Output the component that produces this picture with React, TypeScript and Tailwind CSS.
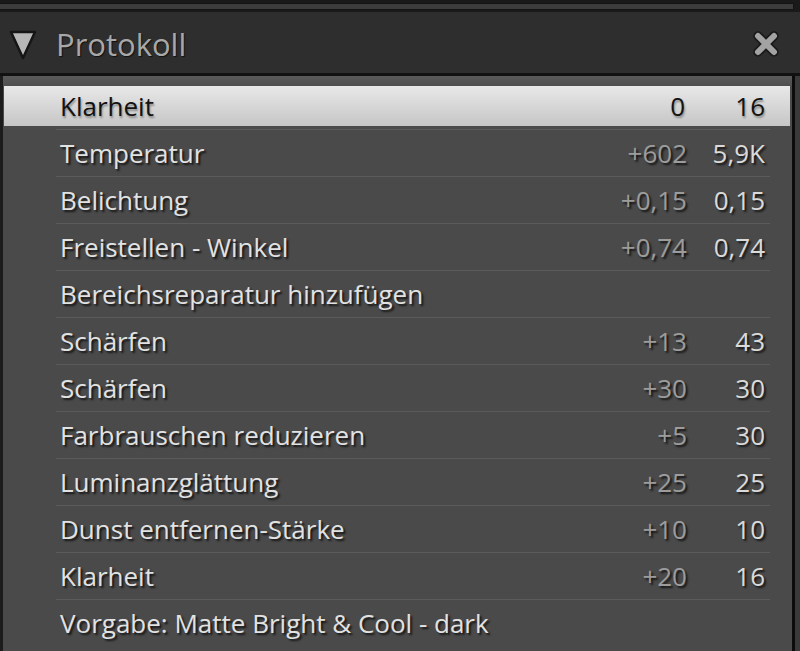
import React from 'react';

type Step = {
  name: string;
  delta?: string;
  value?: string;
};

const steps: Step[] = [
  { name: 'Temperatur', delta: '+602', value: '5,9K' },
  { name: 'Belichtung', delta: '+0,15', value: '0,15' },
  { name: 'Freistellen - Winkel', delta: '+0,74', value: '0,74' },
  { name: 'Bereichsreparatur hinzufügen' },
  { name: 'Schärfen', delta: '+13', value: '43' },
  { name: 'Schärfen', delta: '+30', value: '30' },
  { name: 'Farbrauschen reduzieren', delta: '+5', value: '30' },
  { name: 'Luminanzglättung', delta: '+25', value: '25' },
  { name: 'Dunst entfernen-Stärke', delta: '+10', value: '10' },
  { name: 'Klarheit', delta: '+20', value: '16' },
  { name: 'Vorgabe: Matte Bright & Cool - dark' },
];

export default function App() {
  return (
    <div className="w-[800px] h-[651px] overflow-hidden bg-[#2e2e2e] flex flex-col font-['Open_Sans',sans-serif]">
      {/* top strip of the panel above */}
      <div className="bg-[#1a1a1a] pt-[3px] pb-[2px] pr-[6px]">
        <div className="h-[7px] bg-[#3c3c3c] border border-[#141414] border-l-0" />
      </div>

      {/* header */}
      <div className="h-[61px] flex items-center pl-[9px] pr-[19px] bg-[#2e2e2e]">
        <svg width="28" height="30" viewBox="0 0 28 30" className="mt-[4px]">
          <polygon points="2,2 26,2 14,28" fill="#b6b6b6" stroke="#151515" strokeWidth="2.5" strokeLinejoin="round" />
        </svg>
        <span className="ml-[19px] mt-[3px] text-[31px] leading-none text-[#a8a8a8] [text-shadow:1px_1px_1px_#111]">
          Protokoll
        </span>
        <svg width="30" height="30" viewBox="0 0 30 30" className="ml-auto mt-[2px]">
          <g strokeLinecap="round">
            <line x1="7" y1="7" x2="23" y2="23" stroke="#1a1a1a" strokeWidth="9.5" />
            <line x1="23" y1="7" x2="7" y2="23" stroke="#1a1a1a" strokeWidth="9.5" />
            <line x1="7" y1="7" x2="23" y2="23" stroke="#a3a3a3" strokeWidth="6" />
            <line x1="23" y1="7" x2="7" y2="23" stroke="#a3a3a3" strokeWidth="6" />
          </g>
        </svg>
      </div>

      <div className="h-[3px] bg-[#111]" />

      {/* list */}
      <div className="flex-1 flex bg-[#3a3a3a]">
        <div className="flex-1 mr-[5px] border-l-[3px] border-l-[#1c1c1c] border-r-[3px] border-r-[#0c0c0c] bg-[#4a4a4a] flex flex-col">
          <div className="h-[10px] bg-gradient-to-b from-[#5a5a5a] to-[#4e4e4e]" />
          <div className="h-[40px] ml-[1px] mr-[2px] flex items-center bg-gradient-to-b from-[#e8e8e8] to-[#c6c6c6] text-[26px] text-[#121212] [text-shadow:1px_2px_2px_#8a8a8a]">
            <span className="pl-[56px] flex-1">Klarheit</span>
            <span className="w-[60px] text-right">0</span>
            <span className="w-[80px] text-right mr-[25px]">16</span>
          </div>
          <div className="h-[3px]" />
          {steps.map((step, i) => (
            <div
              key={i}
              className="h-[47px] shrink-0 ml-[53px] mr-[22px] border-t border-[#5b5b5b] flex items-center text-[26px] [text-shadow:2px_2px_2px_#161616]"
            >
              <span className="pl-[4px] flex-1 text-[#e2e2e2] whitespace-nowrap">{step.name}</span>
              <span className="w-[80px] text-right text-[#9c9c9c]">{step.delta}</span>
              <span className="w-[83px] text-right pr-[5px] text-[#dadada]">{step.value}</span>
            </div>
          ))}
        </div>
      </div>
    </div>
  );
}
